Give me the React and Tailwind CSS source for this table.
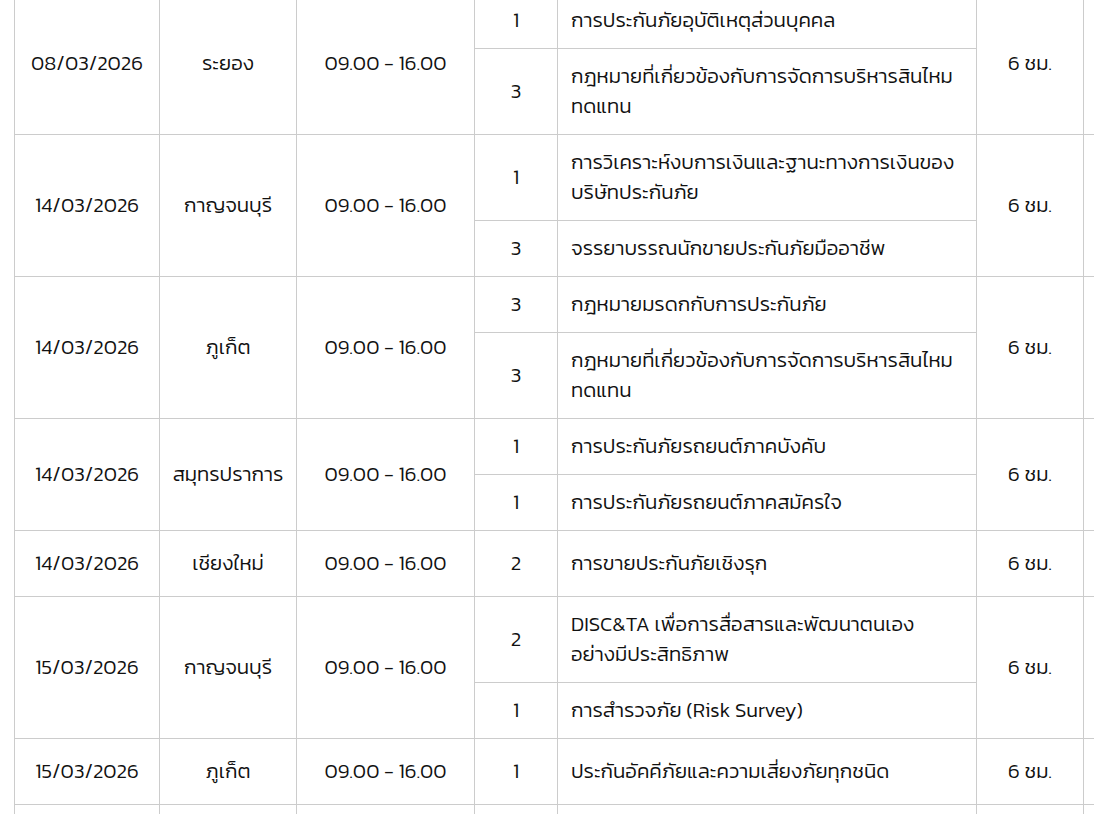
import React from 'react';

const rows = [
  {
    date: '08/03/2026', place: 'ระยอง', time: '09.00 - 16.00', hours: '6 ชม.',
    courses: [
      { level: '1', name: 'การประกันภัยอุบัติเหตุส่วนบุคคล' },
      { level: '3', name: 'กฎหมายที่เกี่ยวข้องกับการจัดการบริหารสินไหมทดแทน' },
    ],
  },
  {
    date: '14/03/2026', place: 'กาญจนบุรี', time: '09.00 - 16.00', hours: '6 ชม.',
    courses: [
      { level: '1', name: 'การวิเคราะห์งบการเงินและฐานะทางการเงินของบริษัทประกันภัย' },
      { level: '3', name: 'จรรยาบรรณนักขายประกันภัยมืออาชีพ' },
    ],
  },
  {
    date: '14/03/2026', place: 'ภูเก็ต', time: '09.00 - 16.00', hours: '6 ชม.',
    courses: [
      { level: '3', name: 'กฎหมายมรดกกับการประกันภัย' },
      { level: '3', name: 'กฎหมายที่เกี่ยวข้องกับการจัดการบริหารสินไหมทดแทน' },
    ],
  },
  {
    date: '14/03/2026', place: 'สมุทรปราการ', time: '09.00 - 16.00', hours: '6 ชม.',
    courses: [
      { level: '1', name: 'การประกันภัยรถยนต์ภาคบังคับ' },
      { level: '1', name: 'การประกันภัยรถยนต์ภาคสมัครใจ' },
    ],
  },
  {
    date: '14/03/2026', place: 'เชียงใหม่', time: '09.00 - 16.00', hours: '6 ชม.',
    courses: [{ level: '2', name: 'การขายประกันภัยเชิงรุก' }],
  },
  {
    date: '15/03/2026', place: 'กาญจนบุรี', time: '09.00 - 16.00', hours: '6 ชม.',
    courses: [
      { level: '2', name: 'DISC&TA เพื่อการสื่อสารและพัฒนาตนเอง\nอย่างมีประสิทธิภาพ' },
      { level: '1', name: 'การสำรวจภัย (Risk Survey)' },
    ],
  },
  {
    date: '15/03/2026', place: 'ภูเก็ต', time: '09.00 - 16.00', hours: '6 ชม.',
    courses: [{ level: '1', name: 'ประกันอัคคีภัยและความเสี่ยงภัยทุกชนิด' }],
  },
  {
    date: '21/03/2026', place: 'ขอนแก่น', time: '09.00 - 16.00', hours: '6 ชม.',
    courses: [{ level: '1', name: 'การประกันภัยรถยนต์ภาคบังคับ' }],
  },
];

const cell = 'border border-[#cccccc] text-center align-middle';

const App = () => {
  return (
    <div className="w-[1094px] h-[814px] overflow-hidden bg-white text-[#111111] font-['Kanit','Noto_Sans_Thai','Noto_Sans','Liberation_Sans',sans-serif] font-light text-[20.5px] leading-[30px]">
      <div className="pl-[14px] mt-[-8px]">
        <table className="border-collapse table-fixed w-[1200px]">
          <colgroup>
            <col className="w-[145px]" />
            <col className="w-[137px]" />
            <col className="w-[178px]" />
            <col className="w-[83px]" />
            <col className="w-[419px]" />
            <col className="w-[107px]" />
            <col className="w-[131px]" />
          </colgroup>
          <tbody>
            {rows.map((row, i) =>
              row.courses.map((course, j) => (
                <tr key={`${i}-${j}`}>
                  {j === 0 && (
                    <>
                      <td rowSpan={row.courses.length} className={`${cell} pt-[17px] pb-[18px]`}>{row.date}</td>
                      <td rowSpan={row.courses.length} className={`${cell} pb-[2px]`}>{row.place}</td>
                      <td rowSpan={row.courses.length} className={`${cell} pb-[2px]`}>{row.time}</td>
                    </>
                  )}
                  <td className={`${cell} pt-[12px] pb-[13px]`}>{course.level}</td>
                  <td className="border border-[#cccccc] text-left align-middle pt-[12px] pb-[13px] pl-[13px] pr-[10px] whitespace-pre-line">{course.name}</td>
                  {j === 0 && (
                    <>
                      <td rowSpan={row.courses.length} className={`${cell} pb-[2px]`}>{row.hours}</td>
                      <td rowSpan={row.courses.length} className={cell}></td>
                    </>
                  )}
                </tr>
              ))
            )}
          </tbody>
        </table>
      </div>
    </div>
  );
};

export default App;
